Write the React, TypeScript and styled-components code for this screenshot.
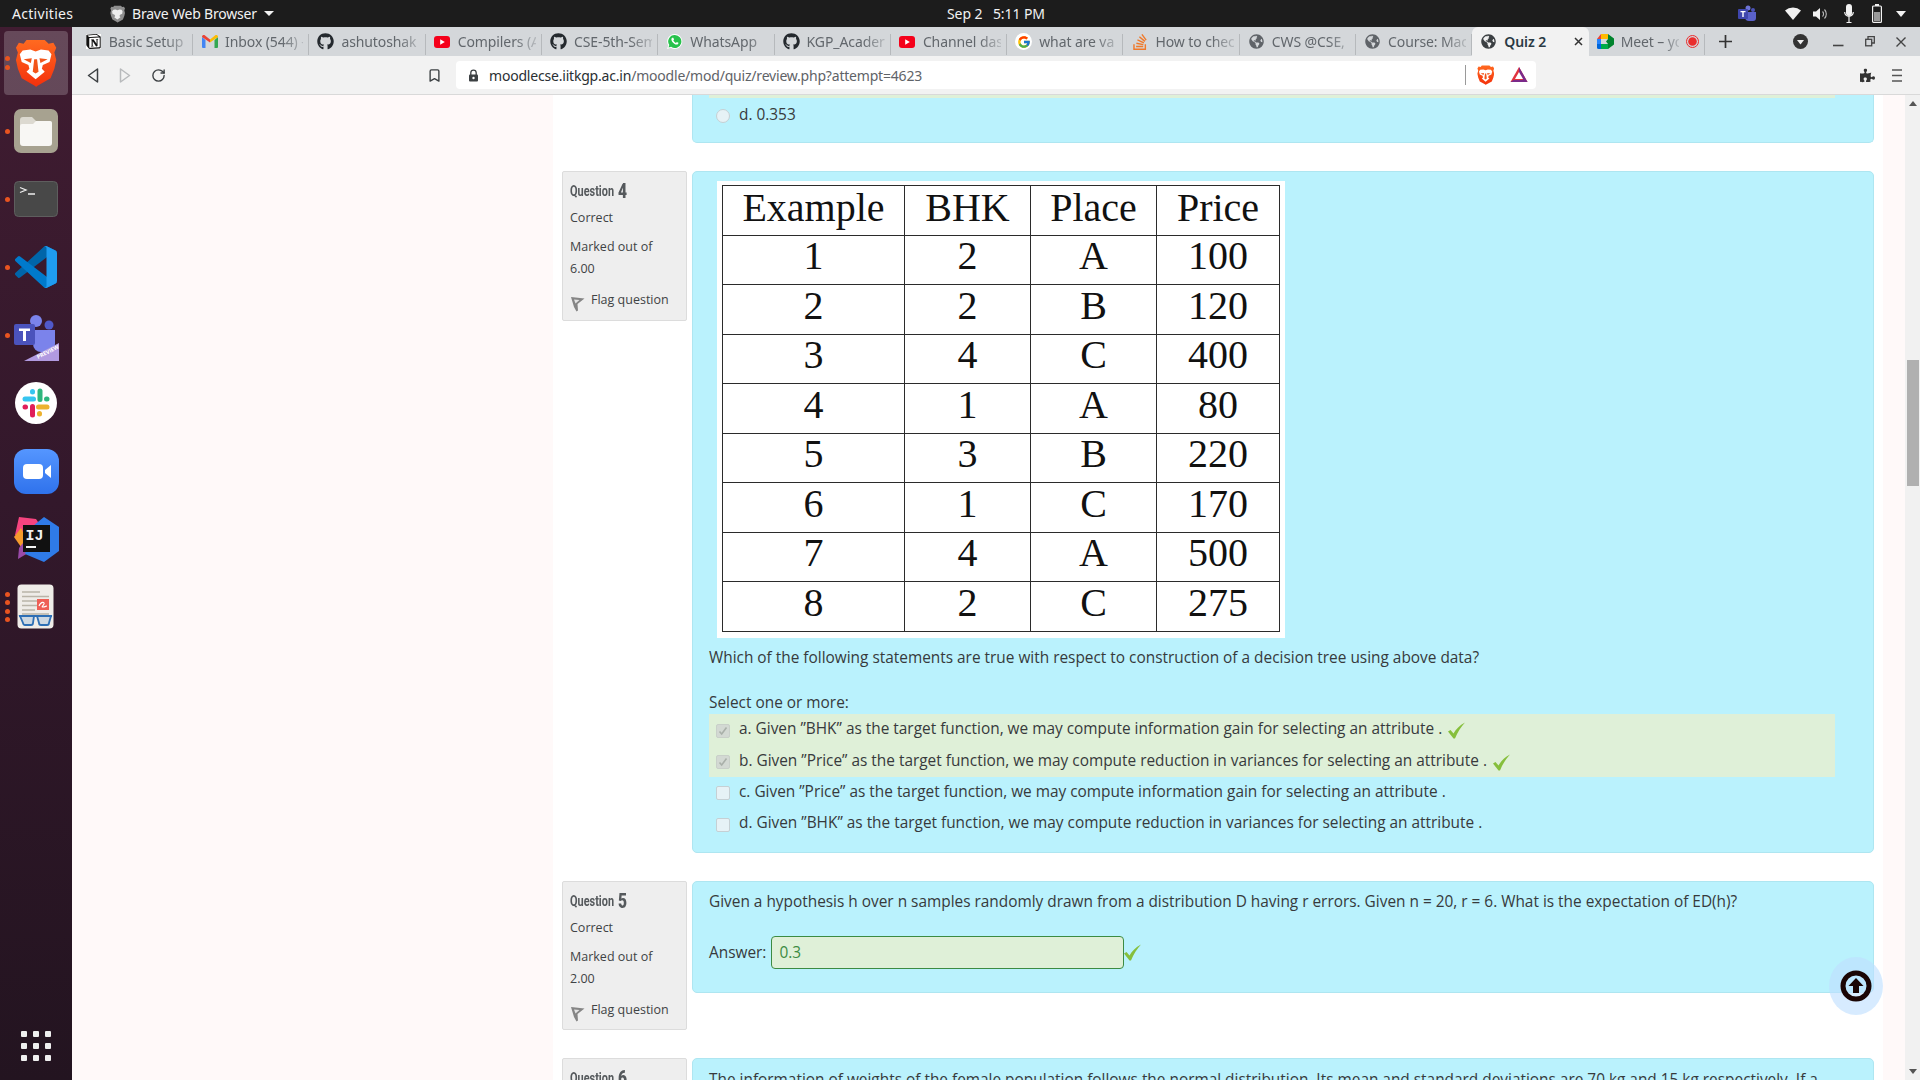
import React from 'react'
import styled, { createGlobalStyle } from 'styled-components'
import { FaGithub, FaGlobeAmericas, FaPuzzlePiece } from 'react-icons/fa'
import { FcGoogle } from 'react-icons/fc'
import { SiNotion, SiStackoverflow } from 'react-icons/si'
import { LuRotateCw, LuBookmark } from 'react-icons/lu'

const UI_FONT = `'Noto Sans', 'Open Sans', sans-serif`

const GlobalStyle = createGlobalStyle`
  html, body {
    margin: 0;
    padding: 0;
    width: 1920px;
    height: 1080px;
    overflow: hidden;
  }
  body {
    font-family: 'Open Sans', sans-serif;
    color: #373a3c;
  }
  * { box-sizing: border-box; }
`

const Screen = styled.div`
  width: 1920px;
  height: 1080px;
  display: flex;
  flex-direction: column;
  overflow: hidden;
`

/* ---------- gnome top bar ---------- */

const TopBar = styled.header`
  height: 27px;
  flex: none;
  background: #1c1c1c;
  color: #f2f2f2;
  font-family: ${UI_FONT};
  font-size: 14px;
  display: flex;
  align-items: center;
`

const TopLeft = styled.div`
  flex: 0 0 947px;
  display: flex;
  align-items: center;
  padding-left: 12px;
`

const Activities = styled.span`
  width: 98px;
  letter-spacing: 0.3px;
`

const AppName = styled.span`
  display: flex;
  align-items: center;
  gap: 7px;
  letter-spacing: -0.2px;
`

const Caret = styled.span`
  width: 0;
  height: 0;
  border-left: 5px solid transparent;
  border-right: 5px solid transparent;
  border-top: 5px solid #f2f2f2;
`

const Clock = styled.span`
  width: 100px;
  white-space: pre;
  letter-spacing: -0.1px;
`

const Tray = styled.div`
  margin-left: auto;
  display: flex;
  align-items: center;
  padding-right: 14px;
  gap: 12px;
  height: 100%;
`

/* ---------- dock ---------- */

const Body = styled.div`
  flex: 1;
  display: flex;
  min-height: 0;
`

const Dock = styled.nav`
  flex: 0 0 72px;
  display: flex;
  flex-direction: column;
  align-items: center;
  padding-top: 2px;
  background: linear-gradient(180deg, #401c31 0%, #33182b 45%, #231420 100%);
`

const DockItem = styled.div<{ $active?: boolean }>`
  position: relative;
  width: 64px;
  height: 68px;
  display: flex;
  align-items: center;
  justify-content: center;
  flex: none;
  &::before {
    content: '';
    display: ${p => (p.$active ? 'block' : 'none')};
    position: absolute;
    inset: 2px 0;
    border-radius: 4px;
    background: rgba(255, 255, 255, 0.2);
  }
  & > svg { position: relative; }
`

const Pips = styled.div`
  position: absolute;
  left: 1px;
  top: 0;
  bottom: 0;
  display: flex;
  flex-direction: column;
  justify-content: center;
  gap: 3.5px;
`

const Pip = styled.span`
  width: 5px;
  height: 5px;
  border-radius: 50%;
  background: #e95420;
`

const AppGrid = styled.div`
  margin-top: auto;
  margin-bottom: 19px;
  display: grid;
  grid-template-columns: repeat(3, 6px);
  grid-auto-rows: 6px;
  gap: 6px;
`

const AppDot = styled.span`
  background: #efefef;
  border-radius: 1px;
`

/* ---------- browser chrome ---------- */

const Browser = styled.div`
  flex: 1;
  min-width: 0;
  display: flex;
  flex-direction: column;
  font-family: ${UI_FONT};
`

const TabStrip = styled.div`
  height: 29px;
  flex: none;
  background: #d4d7da;
  display: flex;
  padding-left: 4.8px;
`

const Tab = styled.div<{ $active?: boolean }>`
  position: relative;
  flex: 0 0 116.3px;
  min-width: 0;
  display: flex;
  align-items: center;
  gap: 7px;
  padding: 0 6px 0 8px;
  font-size: 14px;
  white-space: nowrap;
  color: ${p => (p.$active ? '#2a3a44' : '#62676c')};
  font-weight: ${p => (p.$active ? 600 : 400)};
  background: ${p => (p.$active ? '#f2f2f2' : 'transparent')};
  border-radius: ${p => (p.$active ? '6px 6px 0 0' : '0')};
  &::after {
    content: '';
    display: ${p => (p.$active ? 'none' : 'block')};
    position: absolute;
    right: 0;
    top: 7px;
    bottom: 1px;
    width: 1px;
    background: #b6b9bc;
  }
`

const TabIcon = styled.span`
  flex: 0 0 17px;
  height: 17px;
  display: flex;
  align-items: center;
  justify-content: center;
`

const RoundIcon = styled(TabIcon)`
  background: #fff;
  border-radius: 50%;
`

const TabTitle = styled.span<{ $active?: boolean }>`
  flex: 1;
  min-width: 0;
  overflow: hidden;
  letter-spacing: -0.1px;
  -webkit-mask-image: ${p => (p.$active ? 'none' : 'linear-gradient(90deg, #000 72%, rgba(0,0,0,0.25) 100%)')};
  mask-image: ${p => (p.$active ? 'none' : 'linear-gradient(90deg, #000 72%, rgba(0,0,0,0.25) 100%)')};
`

const NewTab = styled.span`
  margin-left: 14px;
  width: 16px;
  display: flex;
  align-items: center;
`

const WindowControls = styled.div`
  margin-left: auto;
  display: flex;
  align-items: center;
  padding-right: 14px;
  gap: 18px;
`

const Toolbar = styled.div`
  height: 39px;
  flex: none;
  background: #f2f2f2;
  border-bottom: 1px solid #d9d9d9;
  display: flex;
  align-items: center;
  padding-left: 15px;
`

const NavButton = styled.span`
  width: 32px;
  display: flex;
  align-items: center;
  justify-content: flex-start;
  color: #3c4043;
`

const BookmarkBtn = styled.span`
  margin-left: 244px;
  width: 40px;
  display: flex;
  color: #3c4043;
`

const Omnibox = styled.div`
  width: 1080px;
  height: 28px;
  margin-left: -11px;
  background: #fff;
  border-radius: 4px;
  display: flex;
  align-items: center;
  padding-left: 12px;
  padding-right: 8px;
  font-size: 14px;
`

const UrlHost = styled.span`
  color: #2a2f33;
  margin-left: 10px;
  letter-spacing: -0.2px;
`

const UrlPath = styled.span`
  color: #5f6368;
  letter-spacing: -0.2px;
`

const OmniEnd = styled.div`
  margin-left: auto;
  display: flex;
  align-items: center;
  gap: 16px;
  height: 20px;
  padding-left: 11px;
  border-left: 1px solid #9a9a9a;
`

const ToolbarEnd = styled.div`
  margin-left: auto;
  display: flex;
  align-items: center;
  gap: 17px;
  padding-right: 18px;
`

/* ---------- moodle page ---------- */

const Viewport = styled.div`
  flex: 1;
  min-height: 0;
  position: relative;
  display: flex;
  overflow: hidden;
  background: #fff9f9;
  font-family: 'Open Sans', sans-serif;
`

const Column = styled.main`
  width: 1330px;
  margin-left: 481px;
  margin-right: 22px;
  background: #fff;
  padding: 0 9px;
  display: flex;
  flex-direction: column;
  gap: 28px;
  flex: none;
`

const Que = styled.section`
  display: flex;
  align-items: flex-start;
  gap: 5px;
`

const InfoSpacer = styled.div`
  flex: 0 0 125px;
`

const Info = styled.aside<{ $height: number }>`
  flex: 0 0 125px;
  height: ${p => p.$height}px;
  background: #eee;
  border: 1px solid #dcdcdc;
  border-radius: 2px;
  padding: 6px 7px;
  font-size: 12.5px;
  color: #3f4345;
`

const QNumber = styled.div`
  height: 26px;
  display: flex;
  align-items: center;
  font-family: 'Roboto', sans-serif;
  font-weight: 700;
  font-size: 14px;
  color: #55595c;
  transform: scaleX(0.78);
  transform-origin: left center;
  white-space: nowrap;
  & b {
    font-size: 20px;
    margin-left: 5px;
  }
`

const InfoLine = styled.div`
  margin-top: 3px;
  height: 22px;
  line-height: 22px;
  white-space: nowrap;
`

const Grade = styled.div`
  margin-top: 7px;
  line-height: 22px;
  width: 95px;
`

const FlagRow = styled.div`
  margin-top: 10px;
  margin-left: 1px;
  display: flex;
  gap: 6px;
  align-items: flex-start;
  line-height: 20px;
  white-space: nowrap;
  & svg { margin-top: 6px; flex: none; }
`

const Content = styled.div<{ $height: number }>`
  flex: 1;
  height: ${p => p.$height}px;
  min-width: 0;
  background: #baf2fd;
  border: 1px solid #aee6f1;
  border-radius: 5px;
  padding: 9px 16px;
  font-size: 15.4px;
  line-height: 24px;
  overflow: hidden;
`

const ClippedContent = styled(Content)`
  border-top: none;
  border-radius: 0 0 5px 5px;
  padding-top: 0;
`

const HighlightSliver = styled.div`
  height: 3px;
  margin-right: 22px;
  background: #dff0d8;
`

const Figure = styled.div`
  width: 568px;
  height: 457px;
  margin-left: 8px;
  background: #fff;
  padding: 4px 5px;
`

const DataTable = styled.table`
  width: 557px;
  border-collapse: collapse;
  table-layout: fixed;
  font-family: 'Liberation Serif', serif;
  font-size: 40px;
  line-height: 1;
  color: #111;
  text-align: center;
  & th, & td {
    height: 49.5px;
    font-weight: 400;
    border: 1.5px solid #2b2b2b;
  }
  & th { padding: 0 0 4px; }
  & td { padding: 0 0 7px; }
`

const Prompt = styled.p`
  margin: 8px 0 22px;
  line-height: 24px;
`

const SelectLabel = styled.div`
  line-height: 22px;
`

const OptionRow = styled.div<{ $correct?: boolean }>`
  height: 31.4px;
  display: flex;
  align-items: center;
  gap: 9px;
  padding: 0 0 1px 7px;
  width: 1126px;
  white-space: nowrap;
  background: ${p => (p.$correct ? '#dff0d8' : 'transparent')};
`

const Box = styled.span<{ $checked?: boolean; $round?: boolean }>`
  flex: 0 0 14px;
  width: 14px;
  height: 14px;
  margin-top: ${p => (p.$round ? '2px' : '3px')};
  display: flex;
  align-items: center;
  justify-content: center;
  border-radius: ${p => (p.$round ? '50%' : '2px')};
  border: 1px solid ${p => (p.$checked ? '#c9d0c9' : '#c5d0d4')};
  background: ${p => (p.$checked ? '#d3d9d3' : '#e6f2f6')};
`

const RadioRow = styled.div`
  display: flex;
  align-items: center;
  gap: 9px;
  padding-left: 7px;
  height: 34px;
`

const TickMark = styled.span`
  display: inline-flex;
  margin-left: -3px;
  margin-top: 3px;
`

const QuestionText = styled.div`
  margin-top: -1px;
`

const AnswerRow = styled.div`
  margin-top: 22px;
  display: flex;
  align-items: center;
  gap: 5px;
`

const AnswerInput = styled.input`
  width: 353px;
  height: 33px;
  margin-right: -5px;
  border: 1px solid #3c8b43;
  border-radius: 4px;
  background: #dff0d8;
  color: #3c8b43;
  font: 15.4px 'Open Sans', sans-serif;
  padding: 0 7px;
  outline: none;
`

const ScrollTop = styled.div`
  position: absolute;
  left: 1757px;
  top: 862px;
  width: 54px;
  height: 58px;
  border-radius: 50%;
  background: rgba(190, 222, 255, 0.62);
  display: flex;
  align-items: center;
  justify-content: center;
`

const Scrollbar = styled.div`
  position: absolute;
  right: 0;
  top: 0;
  bottom: 0;
  width: 15px;
  background: #f1f1f1;
  display: flex;
  flex-direction: column;
  align-items: center;
  padding: 6px 0;
`

const ScrollThumb = styled.div`
  width: 12px;
  height: 126px;
  margin-top: 254px;
  background: #b0b0b0;
`

const ScrollArrow = styled.span<{ $down?: boolean }>`
  width: 0;
  height: 0;
  border-left: 4px solid transparent;
  border-right: 4px solid transparent;
  ${p => (p.$down ? 'border-top: 5px solid #555; margin-top: auto;' : 'border-bottom: 5px solid #555;')}
`

/* ---------- drawn icons ---------- */

const BraveLogo = ({ size = 44, id = 'braveBody' }: { size?: number; id?: string }) => (
  <svg width={size * 0.86} height={size} viewBox="0 0 43 50">
    <defs>
      <linearGradient id={id} x1="0" y1="0" x2="0" y2="1">
        <stop offset="0" stopColor="#ff6a20" />
        <stop offset="1" stopColor="#f4300c" />
      </linearGradient>
    </defs>
    <path d="M12 1h19l4 4 5-1 3 5-2 5 2 8-2 9-4 10-14 8-1 1-1-1-14-8-4-10-2-9 2-8-2-5 3-5 5 1z" fill={`url(#${id})`} />
    <path d="M8 12l8-1 5.500 2 5.500-2 8 1 3 4-2 8-7 3-1 4 3 3-9.500 8-9.500-8 3-3-1-4-7-3-2-8z" fill="#fff" />
    <path d="M17.500 20l-8.500 1 7.500 4zM25.500 20l8.500 1-7.500 4zM20 21h3l1.500 13-3 2-3-2z" fill="#f2551a" />
  </svg>
)

const FilesIcon = () => (
  <svg width="44" height="44" viewBox="0 0 44 44">
    <rect width="44" height="44" rx="7" fill="#a7a290" />
    <path d="M6 11a3 3 0 0 1 3-3h9l4 4h13a3 3 0 0 1 3 3v5H6z" fill="#dcd9d0" />
    <path d="M6 17a2 2 0 0 1 2-2h11l3-3h14a2 2 0 0 1 2 2v20a3 3 0 0 1-3 3H9a3 3 0 0 1-3-3z" fill="#f8f7f4" />
  </svg>
)

const TerminalIcon = () => (
  <svg width="44" height="36" viewBox="0 0 44 36">
    <rect x=".5" y=".5" width="43" height="35" rx="4" fill="#484848" stroke="#5e5e5e" />
    <path d="M6 6.500l6 2.500-6 2.500" fill="none" stroke="#eee" strokeWidth="1.300" />
    <path d="M14 13h7" stroke="#eee" strokeWidth="1.500" />
  </svg>
)

const VsCodeIcon = () => (
  <svg width="42" height="42" viewBox="0 0 100 100">
    <path d="M96.460 10.800 75.860.870a6.230 6.230 0 0 0-7.100 1.200L1.330 63.600a4.160 4.160 0 0 0 0 6.160l5.500 5a4.160 4.160 0 0 0 5.320.240L93.400 13.300a4.130 4.130 0 0 1 6.600 3.300v-.240a6.250 6.250 0 0 0-3.540-5.560z" fill="#0065a9" />
    <path d="M96.460 89.200l-20.600 9.930a6.230 6.230 0 0 1-7.100-1.200L1.330 36.400a4.160 4.160 0 0 1 0-6.160l5.500-5a4.160 4.160 0 0 1 5.320-.240L93.400 86.700a4.130 4.130 0 0 0 6.600-3.300v.240a6.250 6.250 0 0 1-3.540 5.560z" fill="#007acc" />
    <path d="M75.860 99.130a6.230 6.230 0 0 1-7.100-1.200c2.300 2.300 6.240.670 6.240-2.580V4.650c0-3.250-3.940-4.880-6.240-2.580a6.230 6.230 0 0 1 7.100-1.200l20.600 9.900A6.250 6.250 0 0 1 100 16.400v67.200a6.250 6.250 0 0 1-3.540 5.630z" fill="#1f9cf0" />
  </svg>
)

const TeamsIcon = () => (
  <svg width="46" height="46" viewBox="0 0 46 46" style={{ top: 3 }}>
    <circle cx="23" cy="6" r="6" fill="#7b83eb" />
    <circle cx="36" cy="10" r="4.500" fill="#5059c9" />
    <path d="M20 15h22v14a8 8 0 0 1-8 8h-6a8 8 0 0 1-8-8z" fill="#7b83eb" />
    <rect x="1" y="9" width="21" height="21" rx="2" fill="#4b53bc" />
    <path d="M6 13.500h11v2.600h-4V26h-3V16.100H6z" fill="#fff" />
    <path d="M11 46l35-18v18z" fill="#b19ae0" />
    <text x="25" y="44" fontSize="5.500" fontFamily="Open Sans, sans-serif" fontWeight="700" fill="#fff" transform="rotate(-27 25 44)">PREVIEW</text>
  </svg>
)

const SlackIcon = () => (
  <svg width="42" height="42" viewBox="0 0 42 42">
    <circle cx="21" cy="21" r="21" fill="#fff" />
    <g fill="none" strokeWidth="5" strokeLinecap="round">
      <path d="M10 17h8.500" stroke="#36c5f0" />
      <path d="M17.500 9.500v.5" stroke="#36c5f0" />
      <path d="M25 9v8.500" stroke="#2eb67d" />
      <path d="M32 17h-.5" stroke="#2eb67d" />
      <path d="M32 25h-8.500" stroke="#ecb22e" />
      <path d="M24.500 32v-.5" stroke="#ecb22e" />
      <path d="M17.500 33v-8.500" stroke="#e01e5a" />
      <path d="M10 25h.5" stroke="#e01e5a" />
    </g>
  </svg>
)

const ZoomIcon = () => (
  <svg width="45" height="45" viewBox="0 0 45 45">
    <defs>
      <linearGradient id="zoomBg" x1="0" y1="0" x2="0" y2="1">
        <stop offset="0" stopColor="#5596ff" />
        <stop offset="1" stopColor="#2f72ec" />
      </linearGradient>
    </defs>
    <rect width="45" height="45" rx="12" fill="url(#zoomBg)" />
    <rect x="9" y="15" width="20" height="15" rx="4" fill="#fff" />
    <path d="M31 21l6-5v13l-6-5z" fill="#fff" />
  </svg>
)

const IntellijIcon = () => (
  <svg width="46" height="46" viewBox="0 0 46 46">
    <path d="M6 1l17 2 8 12-18 22-5-15-6-3z" fill="#f5447f" />
    <path d="M1 21l7-9 7 14-7 5z" fill="#f59b2d" />
    <path d="M6 32l8-10 6 12-15 9z" fill="#9a4aa8" />
    <path d="M31 1l15 10v24l-15 11-19-8 8-28z" fill="#2f7be8" />
    <rect x="10" y="9" width="27" height="27" fill="#111" />
    <text x="12.500" y="24" fontFamily="Liberation Mono, monospace" fontWeight="700" fontSize="15" fill="#f2f2f2">IJ</text>
    <rect x="13" y="30" width="10" height="2" fill="#f2f2f2" />
  </svg>
)

const ReaderIcon = () => (
  <svg width="38" height="46" viewBox="0 0 38 46">
    <rect x=".5" y=".5" width="36" height="44" rx="4" fill="#efece8" />
    <path d="M5 8h18M5 12.500h27M5 17h15M5 21.500h15M5 26h13M5 30h27" stroke="#b9b4a8" strokeWidth="1.400" />
    <rect x="20" y="15" width="12" height="11" fill="#ee5f56" />
    <path d="M22 22c2-5 6-4 5-2s-3 3-1 3 3-1 4-1" fill="none" stroke="#fff" strokeWidth="1.100" />
    <path d="M2 32h33" stroke="#2d6fb5" strokeWidth="1.800" />
    <path d="M3 32h14l-1 7a2 2 0 0 1-2 2H8a2 2 0 0 1-2-2zM20 32h14l-2 7a2 2 0 0 1-2 2h-6a2 2 0 0 1-2-2z" fill="#cdd8e2" stroke="#2d6fb5" strokeWidth="1.800" />
  </svg>
)

const GmailIcon = () => (
  <svg width="16" height="13" viewBox="0 0 16 13">
    <path d="M0 2v10a1 1 0 0 0 1 1h2.500V5z" fill="#4285f4" />
    <path d="M16 2v10a1 1 0 0 1-1 1h-2.500V5z" fill="#34a853" />
    <path d="M0 2c0-2 2-2.500 3-1.500L8 4.500v3L0 2z" fill="#ea4335" />
    <path d="M16 2c0-2-2-2.500-3-1.500L8 4.500v3L16 2z" fill="#fbbc04" />
  </svg>
)

const YoutubeIcon = () => (
  <svg width="16" height="12" viewBox="0 0 16 12">
    <rect width="16" height="12" rx="3" fill="#f5001a" />
    <path d="M6.200 3.300l4.600 2.700-4.600 2.700z" fill="#fff" />
  </svg>
)

const WhatsappIcon = () => (
  <svg width="17" height="17" viewBox="0 0 17 17">
    <path d="M8.700 1a7.500 7.500 0 0 0-6.400 11.400L1 16l3.700-1.200A7.500 7.500 0 1 0 8.700 1z" fill="#fff" />
    <path d="M8.700 2a6.500 6.500 0 0 0-5.400 10.100L2.500 14.600l2.600-.8A6.500 6.500 0 1 0 8.700 2z" fill="#27c24c" />
    <path d="M6.200 4.800c-.8.600-1 1.500-.6 2.700.6 1.700 2.200 3.300 3.900 3.900 1.200.4 2.200.1 2.700-.7.300-.5.300-.9.200-1l-1.600-.8-.8 1c-1.300-.5-2.200-1.400-2.700-2.600l.8-.8-.8-1.700z" fill="#fff" />
  </svg>
)

const MeetIcon = () => (
  <svg width="17" height="15" viewBox="0 0 17 15">
    <path d="M4 0h7v5H0z" fill="#ea4335" />
    <path d="M0 5h4v5H0z" fill="#2684fc" />
    <path d="M0 10h4v5H1.500A1.500 1.500 0 0 1 0 13.500z" fill="#0066da" />
    <path d="M4 10h7v5H4z" fill="#00ac47" />
    <path d="M11 0v5l-2 2.500 2 2.500v5l6-4.500v-6z" fill="#00832d" />
    <path d="M4 0h7v5H4z" fill="#ffba00" />
    <path d="M4 5h5v5H4z" fill="#d4d7da" />
  </svg>
)

const RecordDot = () => (
  <svg width="13" height="13" viewBox="0 0 13 13">
    <circle cx="6.500" cy="6.500" r="6" fill="none" stroke="#ea2d2d" />
    <circle cx="6.500" cy="6.500" r="4.300" fill="#ea2d2d" />
  </svg>
)

const FlagIcon = () => (
  <svg width="14" height="16" viewBox="0 0 14 16">
    <path d="M0 1l13.500 1.500-7 5.500 .5 6.500-1.500 1-2.500-4.500z" fill="#858585" />
    <path d="M3 3.500l5.500 .6-4 3.400z" fill="#e4e4e4" />
  </svg>
)

const Tick = () => (
  <svg width="17" height="17" viewBox="0 0 17 17">
    <path d="M0 9.500l2.500-1.500 3 3.500C8 7 11.500 3.500 17 .5c-4 4.500-7.500 9.500-10 16h-1.500z" fill="#86bf3c" />
  </svg>
)

const BoxTick = () => (
  <svg width="10" height="10" viewBox="0 0 10 10">
    <path d="M1.500 5.500l2.200 2.500L8.500 1.500" fill="none" stroke="#a9b0a9" strokeWidth="1.600" />
  </svg>
)

/* ---------- data ---------- */

const TABS: { title: string; icon: React.ReactNode; active?: boolean; extra?: React.ReactNode }[] = [
  { title: 'Basic Setup', icon: <SiNotion size={15} color="#111" style={{ background: '#fff' }} /> },
  { title: 'Inbox (544) -', icon: <GmailIcon /> },
  { title: 'ashutoshak', icon: <FaGithub size={17} color="#24292e" /> },
  { title: 'Compilers (A', icon: <YoutubeIcon /> },
  { title: 'CSE-5th-Sem', icon: <FaGithub size={17} color="#24292e" /> },
  { title: 'WhatsApp', icon: <WhatsappIcon /> },
  { title: 'KGP_Acader', icon: <FaGithub size={17} color="#24292e" /> },
  { title: 'Channel das', icon: <YoutubeIcon /> },
  { title: 'what are va', icon: <RoundIcon><FcGoogle size={14} /></RoundIcon> },
  { title: 'How to chec', icon: <SiStackoverflow size={16} color="#f0792a" /> },
  { title: 'CWS @CSE,', icon: <FaGlobeAmericas size={15} color="#5f6368" /> },
  { title: 'Course: Mac', icon: <FaGlobeAmericas size={15} color="#5f6368" /> },
  { title: 'Quiz 2', icon: <FaGlobeAmericas size={15} color="#3c4043" />, active: true },
  { title: 'Meet – yo', icon: <MeetIcon />, extra: <RecordDot /> },
]

const DOCK: { icon: React.ReactNode; pips: number; active?: boolean }[] = [
  { icon: <BraveLogo size={48} />, pips: 2, active: true },
  { icon: <FilesIcon />, pips: 1 },
  { icon: <TerminalIcon />, pips: 1 },
  { icon: <VsCodeIcon />, pips: 1 },
  { icon: <TeamsIcon />, pips: 1 },
  { icon: <SlackIcon />, pips: 0 },
  { icon: <ZoomIcon />, pips: 0 },
  { icon: <IntellijIcon />, pips: 0 },
  { icon: <ReaderIcon />, pips: 4 },
]

const HEADERS = ['Example', 'BHK', 'Place', 'Price']
const ROWS = [
  ['1', '2', 'A', '100'],
  ['2', '2', 'B', '120'],
  ['3', '4', 'C', '400'],
  ['4', '1', 'A', '80'],
  ['5', '3', 'B', '220'],
  ['6', '1', 'C', '170'],
  ['7', '4', 'A', '500'],
  ['8', '2', 'C', '275'],
]

const OPTIONS = [
  { text: 'a. Given ”BHK” as the target function, we may compute information gain for selecting an attribute .', correct: true },
  { text: 'b. Given ”Price” as the target function, we may compute reduction in variances for selecting an attribute .', correct: true },
  { text: 'c. Given ”Price” as the target function, we may compute information gain for selecting an attribute .', correct: false },
  { text: 'd. Given ”BHK” as the target function, we may compute reduction in variances for selecting an attribute .', correct: false },
]

const QuestionInfo = ({ n, mark, height }: { n: number; mark: string; height: number }) => (
  <Info $height={height}>
    <QNumber>Question <b>{n}</b></QNumber>
    <InfoLine>Correct</InfoLine>
    <Grade>Marked out of {mark}</Grade>
    <FlagRow><FlagIcon />Flag question</FlagRow>
  </Info>
)

const App: React.FC = () => (
  <Screen>
    <GlobalStyle />
    <TopBar>
      <TopLeft>
        <Activities>Activities</Activities>
        <AppName>
          <svg width="15" height="18" viewBox="0 0 43 50">
            <path d="M12 1h19l4 4 5-1 3 5-2 5 2 8-2 9-4 10-14 8-1 1-1-1-14-8-4-10-2-9 2-8-2-5 3-5 5 1z" fill="#8f8f8f" />
            <path d="M10 13l6-1 5.500 2 5.500-2 6 1 3 4-1 7-6 3-2 4 3 3-9 7-9-7 3-3-2-4-6-3-1-7z" fill="#eee" />
          </svg>
          Brave Web Browser
          <Caret />
        </AppName>
      </TopLeft>
      <Clock>Sep 2   5:11 PM</Clock>
      <Tray>
        <svg width="18" height="18" viewBox="0 0 18 18" style={{ marginRight: 17 }}>
          <circle cx="10" cy="3" r="2.500" fill="#6d74d6" />
          <circle cx="15" cy="5" r="2" fill="#4c53b8" />
          <path d="M7 7h11v6a3 3 0 0 1-3 3h-4a4 4 0 0 1-4-4z" fill="#5a61c9" />
          <rect y="4" width="10" height="10" rx="1" fill="#3f46ad" />
          <path d="M2.500 6h5v1.300H5.700V12H4.300V7.300H2.500z" fill="#fff" />
        </svg>
        <svg width="16" height="13" viewBox="0 0 16 13">
          <path d="M0 3.500a12 12 0 0 1 16 0L8 13z" fill="#f2f2f2" />
        </svg>
        <svg width="15" height="14" viewBox="0 0 15 14">
          <path d="M0 4.500h3L7 1v12L3 9.500H0z" fill="#f2f2f2" />
          <path d="M9.500 4.500a3.500 3.500 0 0 1 0 5M11.500 2.500a6.500 6.500 0 0 1 0 9" fill="none" stroke="#bbb" strokeWidth="1.100" />
        </svg>
        <svg width="10" height="20" viewBox="0 0 10 20" style={{ marginLeft: 4 }}>
          <rect x="2" y="0" width="6" height="12" rx="3" fill="#f2f2f2" />
          <path d="M.700 8a4.300 4.300 0 0 0 8.600 0M5 13v5M2.500 18.500h5" fill="none" stroke="#f2f2f2" strokeWidth="1.200" />
        </svg>
        <svg width="10" height="19" viewBox="0 0 10 19" style={{ marginLeft: 6 }}>
          <rect x=".6" y="2" width="8.800" height="16.400" rx="1" fill="none" stroke="#f2f2f2" strokeWidth="1.200" />
          <rect x="3" y="0" width="4" height="2" fill="#f2f2f2" />
          <rect x="2" y="8" width="6" height="9" fill="#9a9a9a" />
        </svg>
        <svg width="10" height="6" viewBox="0 0 10 6" style={{ marginLeft: 2 }}><path d="M0 0h10L5 6z" fill="#f2f2f2" /></svg>
      </Tray>
    </TopBar>
    <Body>
      <Dock>
        {DOCK.map((item, i) => (
          <DockItem key={i} $active={item.active}>
            {item.pips > 0 && (
              <Pips>
                {Array.from({ length: item.pips }).map((_, k) => <Pip key={k} />)}
              </Pips>
            )}
            {item.icon}
          </DockItem>
        ))}
        <AppGrid>
          {Array.from({ length: 9 }).map((_, i) => <AppDot key={i} />)}
        </AppGrid>
      </Dock>
      <Browser>
        <TabStrip>
          {TABS.map(tab => (
            <Tab key={tab.title} $active={tab.active}>
              <TabIcon>{tab.icon}</TabIcon>
              <TabTitle $active={tab.active}>{tab.title}</TabTitle>
              {tab.extra}
              {tab.active && (
                <svg width="9" height="9" viewBox="0 0 9 9"><path d="M1 1l7 7M8 1L1 8" stroke="#333" strokeWidth="1.500" /></svg>
              )}
            </Tab>
          ))}
          <NewTab>
            <svg width="13" height="13" viewBox="0 0 13 13"><path d="M6.500 0v13M0 6.500h13" stroke="#333" strokeWidth="1.700" /></svg>
          </NewTab>
          <WindowControls>
            <svg width="15" height="15" viewBox="0 0 15 15" style={{ marginRight: 7 }}>
              <circle cx="7.500" cy="7.500" r="7.500" fill="#333" />
              <path d="M4 6h7l-3.500 4.500z" fill="#eee" />
            </svg>
            <svg width="11" height="11" viewBox="0 0 11 11" style={{ marginRight: 3 }}><path d="M0 9.500h10.500" stroke="#444" strokeWidth="1.600" /></svg>
            <svg width="10" height="11" viewBox="0 0 10 11" style={{ marginRight: 3 }}>
              <path d="M3 3V.7h6.300V7H7" fill="none" stroke="#444" strokeWidth="1.300" />
              <rect x=".7" y="3.300" width="6" height="6.500" fill="none" stroke="#444" strokeWidth="1.300" />
            </svg>
            <svg width="10" height="10" viewBox="0 0 10 10"><path d="M.5.500l9 9M9.500.500l-9 9" stroke="#444" strokeWidth="1.400" /></svg>
          </WindowControls>
        </TabStrip>
        <Toolbar>
          <NavButton>
            <svg width="12" height="15" viewBox="0 0 12 15"><path d="M10.500 1v13L1.500 7.500z" fill="none" stroke="#3c4043" strokeWidth="1.500" strokeLinejoin="round" /></svg>
          </NavButton>
          <NavButton>
            <svg width="12" height="15" viewBox="0 0 12 15"><path d="M1.500 1v13l9-6.500z" fill="none" stroke="#b8babc" strokeWidth="1.500" strokeLinejoin="round" /></svg>
          </NavButton>
          <NavButton>
            <LuRotateCw size={15} strokeWidth={2.200} />
          </NavButton>
          <BookmarkBtn>
            <LuBookmark size={15} strokeWidth={2.200} />
          </BookmarkBtn>
          <Omnibox>
            <svg width="11" height="13" viewBox="0 0 11 13">
              <path d="M2.800 6V3.800a2.700 2.700 0 0 1 5.400 0V6" fill="none" stroke="#3c4043" strokeWidth="1.300" />
              <rect x="1" y="5.500" width="9" height="7" rx="1" fill="#3c4043" />
              <circle cx="5.500" cy="9" r="1.200" fill="#fff" />
            </svg>
            <UrlHost>moodlecse.iitkgp.ac.in</UrlHost>
            <UrlPath>/moodle/mod/quiz/review.php?attempt=4623</UrlPath>
            <OmniEnd>
              <BraveLogo size={20} id="braveSmall" />
              <svg width="18" height="18" viewBox="0 0 18 18">
                <path d="M9 1l8.500 15H.5z" fill="#e0333f" />
                <path d="M9 1l8.500 15H9l4.300-1.800L9 6.500z" fill="#7a2a8a" />
                <path d="M.5 16h17l-3-2H3.500z" fill="#7a2a8a" />
                <path d="M9 6l4 7H5z" fill="#fff" />
              </svg>
            </OmniEnd>
          </Omnibox>
          <ToolbarEnd>
            <FaPuzzlePiece size={15} color="#333" />
            <svg width="10" height="13" viewBox="0 0 10 13"><path d="M0 1h10M0 6.500h10M0 12h10" stroke="#555" strokeWidth="1.500" /></svg>
          </ToolbarEnd>
        </Toolbar>
        <Viewport>
          <Column>
            <Que>
              <InfoSpacer />
              <ClippedContent $height={48}>
                <HighlightSliver />
                <RadioRow>
                  <Box $round />
                  d. 0.353
                </RadioRow>
              </ClippedContent>
            </Que>
            <Que>
              <QuestionInfo n={4} mark="6.00" height={150} />
              <Content $height={682}>
                <Figure>
                  <DataTable>
                    <colgroup>
                      <col width="182" /><col width="126" /><col width="126" /><col width="123" />
                    </colgroup>
                    <thead>
                      <tr>{HEADERS.map(h => <th key={h}>{h}</th>)}</tr>
                    </thead>
                    <tbody>
                      {ROWS.map(row => (
                        <tr key={row[0]}>{row.map((c, i) => <td key={i}>{c}</td>)}</tr>
                      ))}
                    </tbody>
                  </DataTable>
                </Figure>
                <Prompt>Which of the following statements are true with respect to construction of a decision tree using above data?</Prompt>
                <SelectLabel>Select one or more:</SelectLabel>
                {OPTIONS.map(opt => (
                  <OptionRow key={opt.text} $correct={opt.correct}>
                    <Box $checked={opt.correct}>{opt.correct && <BoxTick />}</Box>
                    {opt.text}
                    {opt.correct && <TickMark><Tick /></TickMark>}
                  </OptionRow>
                ))}
              </Content>
            </Que>
            <Que>
              <QuestionInfo n={5} mark="2.00" height={149} />
              <Content $height={112}>
                <QuestionText>Given a hypothesis h over n samples randomly drawn from a distribution D having r errors. Given n = 20, r = 6. What is the expectation of ED(h)?</QuestionText>
                <AnswerRow>
                  Answer:
                  <AnswerInput readOnly defaultValue="0.3" />
                  <Tick />
                </AnswerRow>
              </Content>
            </Que>
            <Que>
              <QuestionInfo n={6} mark="2.00" height={149} />
              <Content $height={112}>
                The information of weights of the female population follows the normal distribution. Its mean and standard deviations are 70 kg and 15 kg respectively. If a
              </Content>
            </Que>
          </Column>
          <ScrollTop>
            <svg width="32" height="32" viewBox="0 0 32 32">
              <circle cx="16" cy="16" r="13" fill="none" stroke="#1a0505" strokeWidth="5" />
              <path d="M16 8l7.500 8H19v7h-6v-7H8.500z" fill="#1a0505" />
            </svg>
          </ScrollTop>
          <Scrollbar>
            <ScrollArrow />
            <ScrollThumb />
            <ScrollArrow $down />
          </Scrollbar>
        </Viewport>
      </Browser>
    </Body>
  </Screen>
)

export default App
